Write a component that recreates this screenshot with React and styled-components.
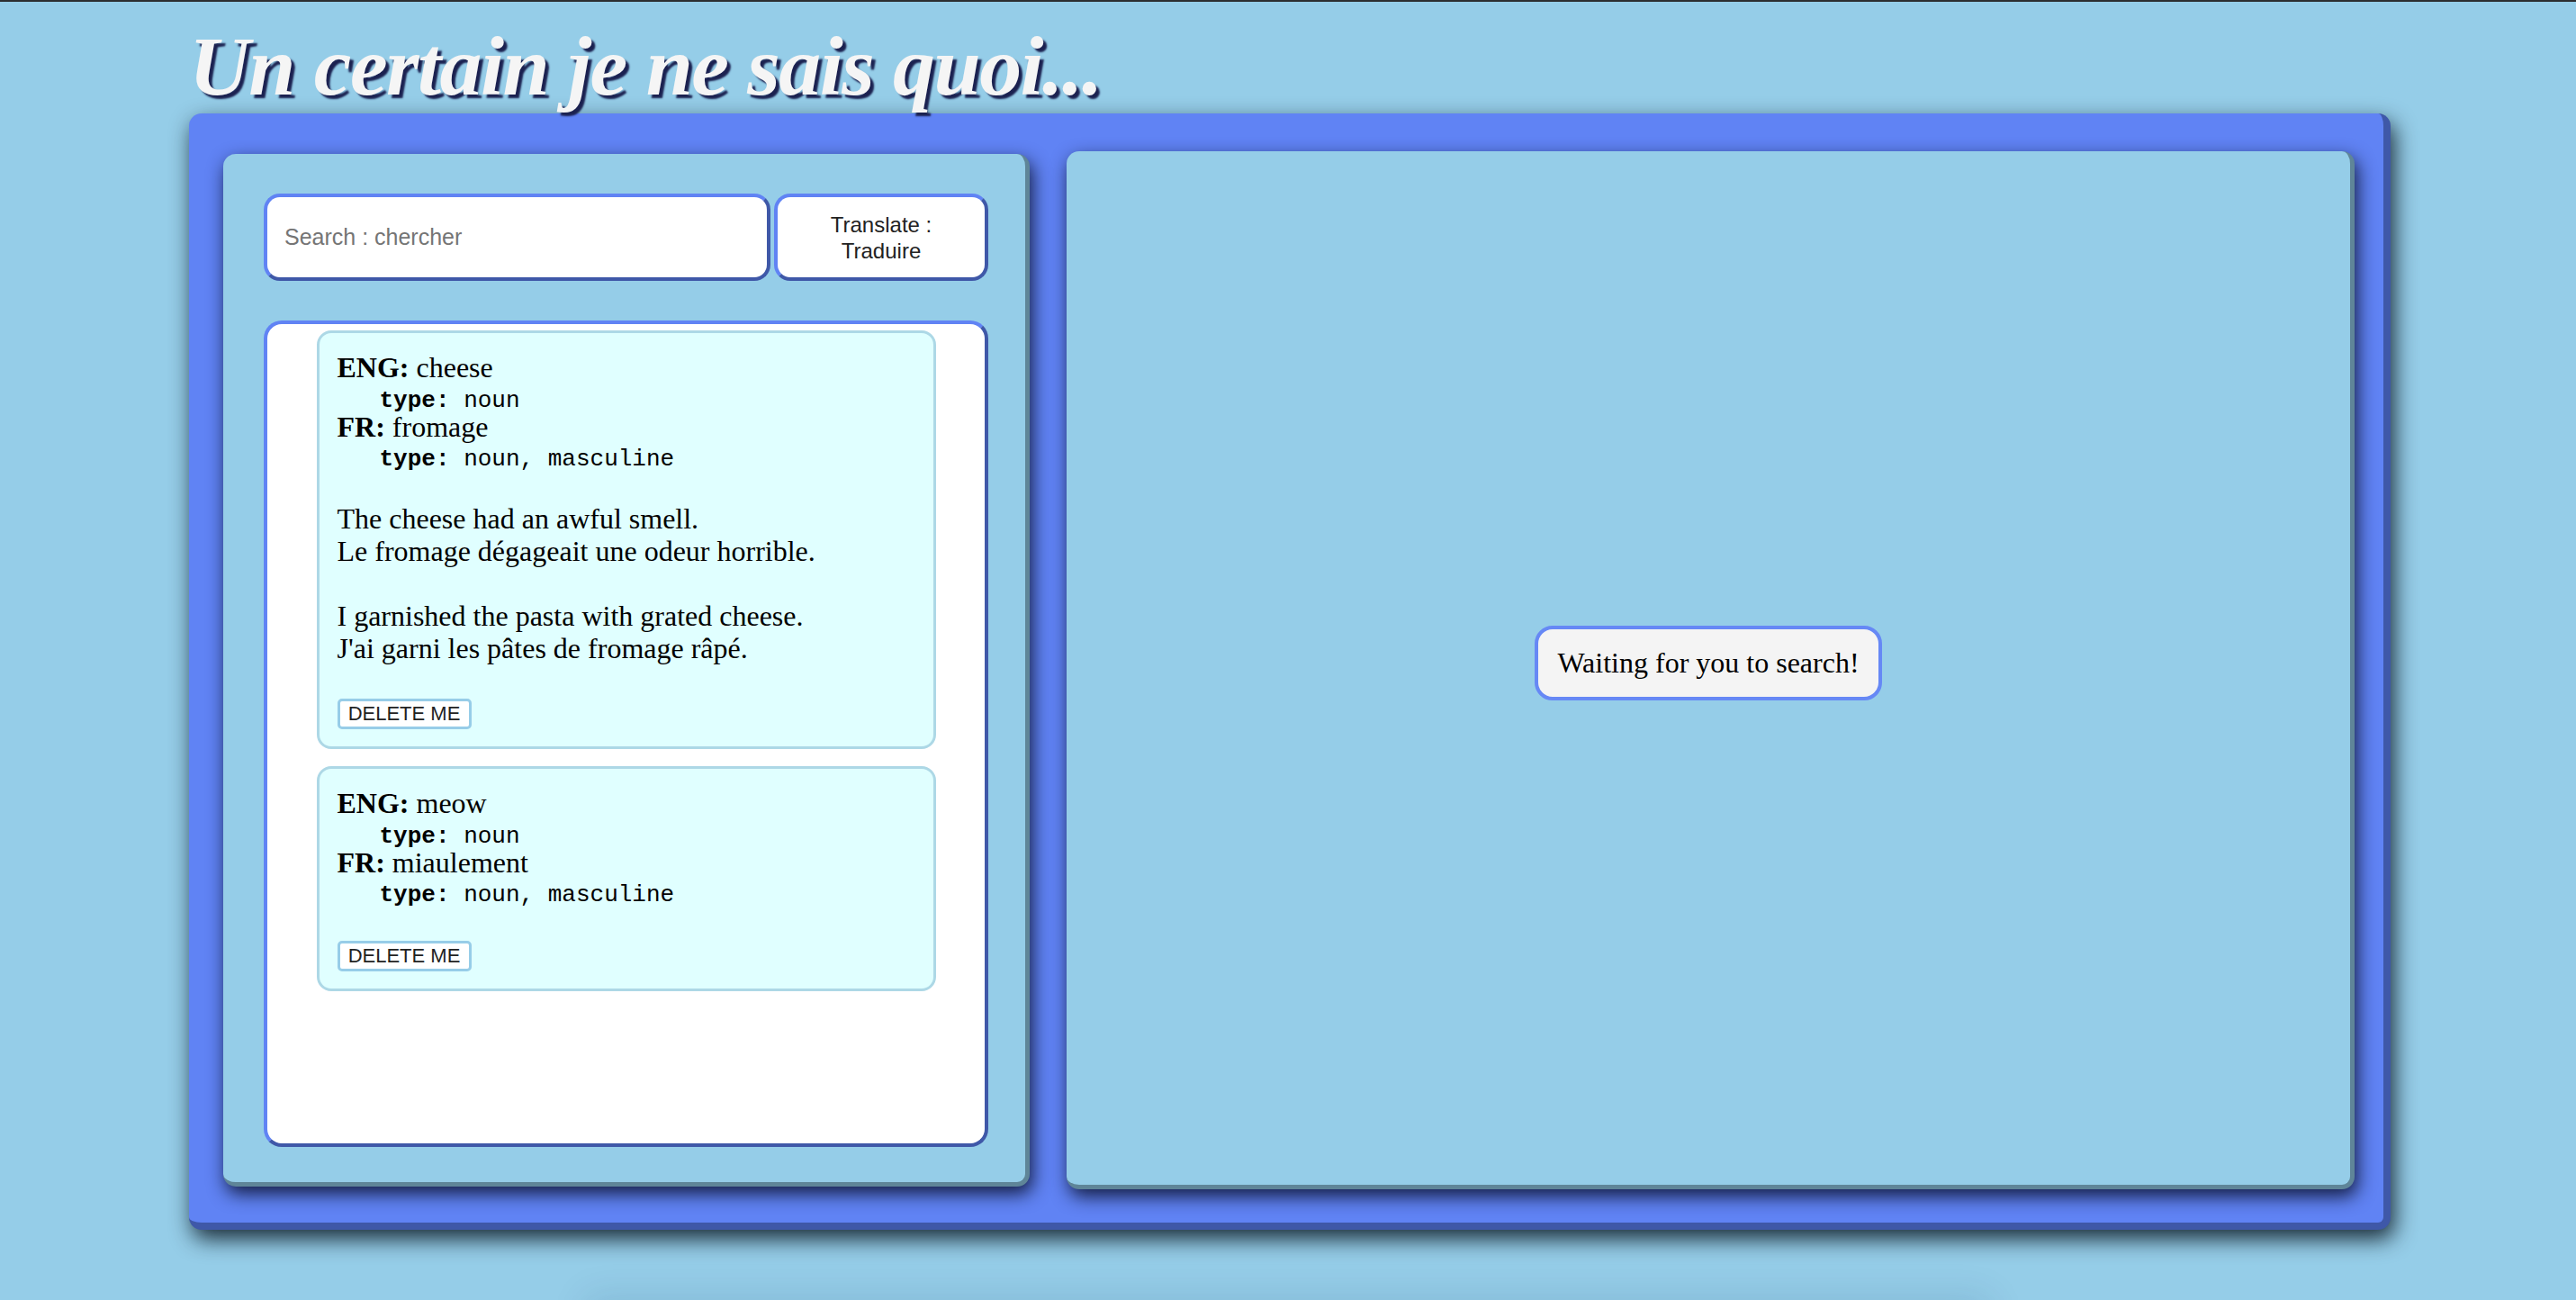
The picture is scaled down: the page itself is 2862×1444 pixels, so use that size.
import React from 'react';
import styled, { createGlobalStyle } from 'styled-components';

const GlobalStyle = createGlobalStyle`
  body {
    margin: 0;
    background-color: #95cde8;
    border-top: 2px solid #2c2e30;
    font-family: "Liberation Serif", "Times New Roman", serif;
  }
`;

const Page = styled.div`
  padding: 19px 0 0 210px;
  width: 2446px;
`;

const Title = styled.h1`
  margin: 0 0 1px;
  font: italic 700 94px/104px "Liberation Serif", "Times New Roman", serif;
  letter-spacing: -1.6px;
  color: #f5f5f5;
  text-shadow: 4px 4px 2px #1b2150;
`;

const Frame = styled.main`
  box-sizing: border-box;
  width: 2446px;
  display: grid;
  grid-template-columns: 896px 1431px;
  column-gap: 41px;
  align-items: center;
  padding: 42px 32px 37px 38px;
  background-color: #6083f4;
  border-right: 8px solid #3f58a8;
  border-bottom: 8px solid #3f58a8;
  border-radius: 14px;
  box-shadow: 4px 10px 24px rgba(5, 15, 25, 0.85);
`;

const Panel = styled.section`
  box-sizing: border-box;
  height: ${(p) => p.$h}px;
  background-color: #95cde8;
  border-right: 5px solid #5f8598;
  border-bottom: 5px solid #5f8598;
  border-radius: 14px;
  box-shadow: 3px 8px 20px rgba(12, 18, 48, 0.9);
`;

const SearchPanel = styled(Panel)`
  display: flex;
  flex-direction: column;
  padding: 44px 41px 39px 45px;
`;

const ResultPanel = styled(Panel)`
  display: flex;
  align-items: center;
  justify-content: center;
`;

const SearchRow = styled.form`
  display: flex;
  gap: 4px;
  height: 97px;
`;

const boxBorder = `
  border: 4px solid;
  border-color: #6083f4 #3f58a8 #3f58a8 #6083f4;
`;

const SearchInput = styled.input`
  flex: 0 0 563px;
  box-sizing: border-box;
  ${boxBorder}
  border-radius: 18px;
  padding: 0 19px;
  background: #fff;
  font: 25px "Liberation Sans", Arial, sans-serif;
  outline: none;
  &::placeholder {
    color: #757575;
  }
`;

const TranslateButton = styled.button`
  flex: 1;
  ${boxBorder}
  border-radius: 18px;
  background: #fff;
  color: #222;
  font: 24px/29px "Liberation Sans", Arial, sans-serif;
  padding: 0 10px;
`;

const List = styled.div`
  margin-top: 44px;
  height: 918px;
  box-sizing: border-box;
  background: #fff;
  ${boxBorder}
  border-radius: 20px;
  padding: 7px 0;
  display: flex;
  flex-direction: column;
  align-items: center;
  gap: 19px;
  overflow: hidden;
`;

const Card = styled.article`
  width: 688px;
  box-sizing: border-box;
  background: #e0ffff;
  border: 3px solid #add8e6;
  border-radius: 16px;
  padding: 22px 20px 19px;
  font-size: 32px;
  color: #000;
`;

const Header = styled.div`
  line-height: 32.5px;
`;

const TypeLine = styled.div`
  padding-left: 47px;
  span {
    font: 26px/26px "Liberation Mono", "Courier New", monospace;
  }
`;

const Examples = styled.div`
  margin-top: 35px;
  line-height: 36px;
  p {
    margin: 0;
  }
  p + p {
    margin-top: 36px;
  }
`;

const DeleteButton = styled.button`
  display: block;
  margin-top: 38px;
  width: 149px;
  height: 34px;
  padding: 0;
  background: #fff;
  border: 3px solid #97cde8;
  border-radius: 5px;
  color: #222;
  font: 22px "Liberation Sans", Arial, sans-serif;
`;

const Waiting = styled.div`
  margin-bottom: 12px;
  background: #f4f4f4;
  border: 4px solid #6688f5;
  border-radius: 20px;
  padding: 19px 21px;
  font-size: 32px;
  line-height: 37px;
  color: #000;
`;

const Footer = styled.footer`
  width: 1560px;
  height: 120px;
  margin: 80px auto 0;
  box-shadow: 0 -6px 40px rgba(0, 50, 90, 0.12);
`;

const words = [
  {
    id: 1,
    eng: 'cheese',
    engType: 'noun',
    fr: 'fromage',
    frType: 'noun, masculine',
    examples: [
      ['The cheese had an awful smell.', 'Le fromage dégageait une odeur horrible.'],
      ['I garnished the pasta with grated cheese.', "J'ai garni les pâtes de fromage râpé."],
    ],
  },
  {
    id: 2,
    eng: 'meow',
    engType: 'noun',
    fr: 'miaulement',
    frType: 'noun, masculine',
    examples: [],
  },
];

function WordCard({ word }) {
  return (
    <Card>
      <Header>
        <div><b>ENG:</b> {word.eng}</div>
        <TypeLine><span><b>type:</b> {word.engType}</span></TypeLine>
        <div><b>FR:</b> {word.fr}</div>
        <TypeLine><span><b>type:</b> {word.frType}</span></TypeLine>
      </Header>
      {word.examples.length > 0 && (
        <Examples>
          {word.examples.map((ex, i) => (
            <p key={i}>
              {ex[0]}
              <br />
              {ex[1]}
            </p>
          ))}
        </Examples>
      )}
      <DeleteButton>DELETE ME</DeleteButton>
    </Card>
  );
}

export default function App() {
  return (
    <>
      <GlobalStyle />
      <Page>
        <Title>Un certain je ne sais quoi...</Title>
        <Frame>
          <SearchPanel $h={1147}>
            <SearchRow onSubmit={(e) => e.preventDefault()}>
              <SearchInput placeholder="Search : chercher" />
              <TranslateButton>
                Translate :<br />Traduire
              </TranslateButton>
            </SearchRow>
            <List>
              {words.map((w) => (
                <WordCard key={w.id} word={w} />
              ))}
            </List>
          </SearchPanel>
          <ResultPanel $h={1153}>
            <Waiting>Waiting for you to search!</Waiting>
          </ResultPanel>
        </Frame>
      </Page>
      <Footer />
    </>
  );
}
